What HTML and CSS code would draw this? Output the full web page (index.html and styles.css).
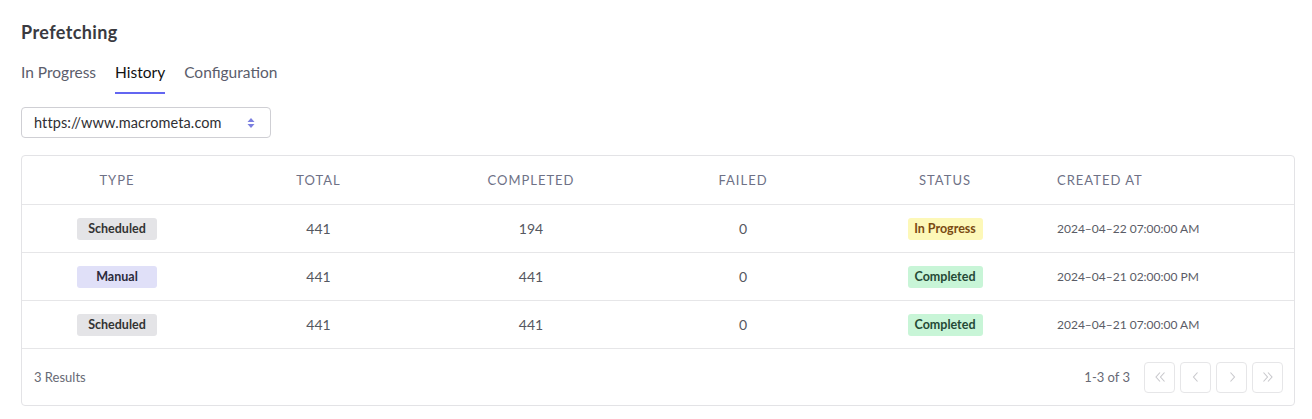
FILE: index.html
```html
<!DOCTYPE html>
<html>
<head>
<meta charset="utf-8">
<link rel="stylesheet" href="styles.css">
</head>
<body>
<div class="page">
  <h1 class="title">Prefetching</h1>
  <nav class="tabs">
    <span class="tab">In Progress</span>
    <span class="tab active">History</span>
    <span class="tab">Configuration</span>
  </nav>
  <div class="select">
    <span class="select-text">https://www.macrometa.com</span>
    <svg class="select-icon" width="8" height="12" viewBox="0 0 8 12"><path d="M4 1 L7.5 5 H0.5 Z" fill="#7b7fe0"/><path d="M4 11 L7.5 7 H0.5 Z" fill="#7b7fe0"/></svg>
  </div>
  <div class="card">
    <div class="row head">
      <div class="cell c">TYPE</div>
      <div class="cell c">TOTAL</div>
      <div class="cell c">COMPLETED</div>
      <div class="cell c">FAILED</div>
      <div class="cell c">STATUS</div>
      <div class="cell l">CREATED AT</div>
    </div>
    <div class="row">
      <div class="cell c"><span class="badge type sched">Scheduled</span></div>
      <div class="cell c">441</div>
      <div class="cell c">194</div>
      <div class="cell c">0</div>
      <div class="cell c"><span class="badge status progress">In Progress</span></div>
      <div class="cell l date">2024–04–22 07:00:00 AM</div>
    </div>
    <div class="row">
      <div class="cell c"><span class="badge type manual">Manual</span></div>
      <div class="cell c">441</div>
      <div class="cell c">441</div>
      <div class="cell c">0</div>
      <div class="cell c"><span class="badge status done">Completed</span></div>
      <div class="cell l date">2024–04–21 02:00:00 PM</div>
    </div>
    <div class="row">
      <div class="cell c"><span class="badge type sched">Scheduled</span></div>
      <div class="cell c">441</div>
      <div class="cell c">441</div>
      <div class="cell c">0</div>
      <div class="cell c"><span class="badge status done">Completed</span></div>
      <div class="cell l date">2024–04–21 07:00:00 AM</div>
    </div>
    <div class="footer">
      <span class="results">3 Results</span>
      <div class="pager">
        <span class="range">1-3 of 3</span>
        <span class="pbtn"><svg width="14" height="14" viewBox="0 0 14 14"><path d="M7 2.5 L3 7 L7 11.5 M11.5 2.5 L7.5 7 L11.5 11.5" fill="none" stroke="#c8c8cc" stroke-width="1.1"/></svg></span>
        <span class="pbtn"><svg width="14" height="14" viewBox="0 0 14 14"><path d="M8.5 2.5 L4.5 7 L8.5 11.5" fill="none" stroke="#c8c8cc" stroke-width="1.1"/></svg></span>
        <span class="pbtn"><svg width="14" height="14" viewBox="0 0 14 14"><path d="M5.5 2.5 L9.5 7 L5.5 11.5" fill="none" stroke="#c8c8cc" stroke-width="1.1"/></svg></span>
        <span class="pbtn"><svg width="14" height="14" viewBox="0 0 14 14"><path d="M2.5 2.5 L6.5 7 L2.5 11.5 M7 2.5 L11 7 L7 11.5" fill="none" stroke="#c8c8cc" stroke-width="1.1"/></svg></span>
      </div>
    </div>
  </div>
</div>
</body>
</html>
```
FILE: styles.css
```css
* { box-sizing: border-box; }
html, body { margin: 0; padding: 0; background: #fff; }
body { font-family: Lato, "Noto Sans", sans-serif; color: #3f3f46; }
.page { padding: 20px 17px 0 21px; }
.title { margin: 0; font-size: 18px; font-weight: 700; color: #3a3a40; line-height: 24px; letter-spacing: 0.4px; }
.tabs { display: flex; gap: 19px; margin-top: 18px; }
.tab { font-size: 15.5px; color: #5b5d6b; line-height: 20px; padding-bottom: 10px; border-bottom: 2px solid transparent; }
.tab.active { color: #111; border-bottom-color: #6366f1; }
.select { margin-top: 13px; width: 250px; height: 31px; border: 1px solid #cfcfd4; border-radius: 4px; display: flex; align-items: center; justify-content: space-between; padding: 0 15px 0 12px; }
.select-text { font-size: 14.5px; color: #2f2f33; letter-spacing: 0.1px; }
.card { margin-top: 17px; border: 1px solid #e3e3e6; border-radius: 4px; }
.row { display: grid; grid-template-columns: 190px 213px 212px 212px 192px 1fr; height: 48px; border-bottom: 1px solid #e6e6e8; align-items: center; }
.row.head { height: 49px; }
.cell { font-size: 14px; color: #555861; }
.cell.c { text-align: center; }
.cell.l { padding-left: 16px; }
.head .cell { font-size: 13px; letter-spacing: 1px; color: #6e7186; }
.date { font-size: 12px; color: #5a5c66; }
.badge { display: inline-block; height: 22px; line-height: 22px; border-radius: 3px; font-size: 12.5px; font-weight: 700; text-align: center; }
.badge.type { width: 80px; }
.badge.status { width: 75px; }
.sched { background: #e4e4e7; color: #333; }
.manual { background: #e0e0f8; color: #2b2b3d; }
.progress { background: #fdf8b8; color: #7a4a12; }
.done { background: #c8f5d7; color: #254a36; }
.footer { display: flex; justify-content: space-between; align-items: center; height: 56px; padding: 0 11px 0 12px; }
.results { font-size: 13px; color: #686a75; }
.pager { display: flex; align-items: center; gap: 5px; }
.range { font-size: 13px; color: #686a75; margin-right: 9px; }
.pbtn { width: 31px; height: 31px; border: 1px solid #e6e6e8; border-radius: 4px; display: flex; align-items: center; justify-content: center; }
```
